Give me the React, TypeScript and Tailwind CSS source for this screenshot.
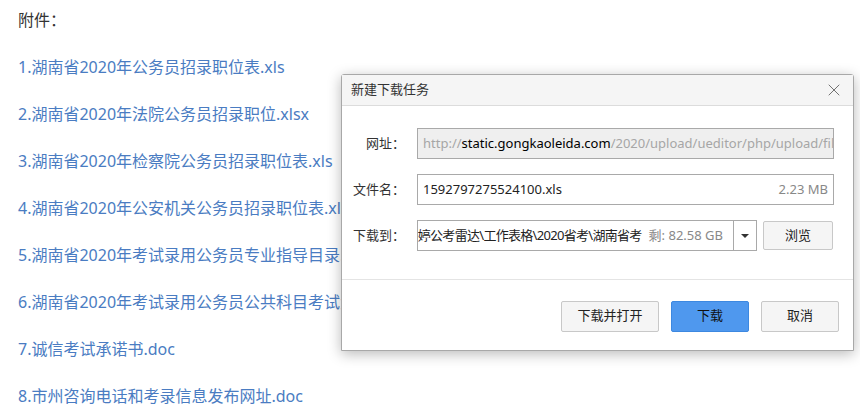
import { X } from "lucide-react";

const files = [
  "1.湖南省2020年公务员招录职位表.xls",
  "2.湖南省2020年法院公务员招录职位.xlsx",
  "3.湖南省2020年检察院公务员招录职位表.xls",
  "4.湖南省2020年公安机关公务员招录职位表.xls",
  "5.湖南省2020年考试录用公务员专业指导目录.xls",
  "6.湖南省2020年考试录用公务员公共科目考试大纲.doc",
  "7.诚信考试承诺书.doc",
  "8.市州咨询电话和考录信息发布网址.doc",
];

const cjk = "font-['Segoe_UI','Noto_Sans','Noto_Sans_CJK_SC',sans-serif]";

function Field({ label, children }: { label: string; children: React.ReactNode }) {
  return (
    <div className="flex items-center">
      <span className="w-[65px] pr-[12px] text-right text-[13px] text-[#333]">{label}</span>
      {children}
    </div>
  );
}

export default function App() {
  return (
    <div className={`relative h-[415px] w-[860px] overflow-hidden bg-white ${cjk}`}>
      <div className="flex flex-col gap-[23px] pl-[18px] pt-[8px] text-[16px] leading-[24px] whitespace-nowrap">
        <p className="text-[#333]">附件：</p>
        {files.map((f) => (
          <p key={f} className="text-[#4a7cc2]">
            {f}
          </p>
        ))}
      </div>

      <div className="absolute left-[341px] top-[74px] flex h-[277px] w-[513px] flex-col rounded-t-[3px] border border-[#a8a8a8] bg-white shadow-[0_3px_14px_rgba(0,0,0,0.28)]">
        <div className="flex h-[31px] items-center justify-between border-b border-[#dcdcdc] bg-[#f5f5f5] pl-[9px] pr-[9px]">
          <span className="text-[13px] text-[#333]">新建下载任务</span>
          <X className="h-[20px] w-[20px] text-[#666]" strokeWidth={1.1} />
        </div>

        <div className="flex flex-col gap-[15px] pl-[10px] pt-[22px]">
          <Field label="网址：">
            <div className="flex h-[31px] w-[417px] items-center overflow-hidden whitespace-nowrap border border-[#a9a9a9] bg-[#efefef] pl-[5px] text-[13px] text-[#a6a6a6]">
              http://<span className="text-black">static.gongkaoleida.com</span>/2020/upload/ueditor/php/upload/file/2
            </div>
          </Field>
          <Field label="文件名：">
            <div className="flex h-[31px] w-[417px] items-center justify-between border border-[#a9a9a9] bg-white pl-[5px] pr-[5px] text-[13px]">
              <span className="text-[#222]">1592797275524100.xls</span>
              <span className="text-[#888]">2.23 MB</span>
            </div>
          </Field>
          <Field label="下载到：">
            <div className="flex h-[31px] w-[340px] items-center border border-[#a9a9a9] bg-white text-[13px]">
              <div className="flex min-w-0 flex-1 justify-end overflow-hidden whitespace-nowrap pr-[10px]">
                <span className="shrink-0 tracking-[-0.7px] text-[#222]">婷公考雷达\工作表格\2020省考\湖南省考</span>
                <span className="ml-[7px] shrink-0 text-[#888]">剩: 82.58 GB</span>
              </div>
              <div className="flex h-full w-[23px] shrink-0 items-center justify-center border-l border-[#a9a9a9]">
                <span className="h-0 w-0 border-x-[4px] border-t-[4px] border-x-transparent border-t-[#333]" />
              </div>
            </div>
            <button className="ml-[6px] h-[29px] w-[70px] rounded-[2px] border border-[#c8c8c8] bg-[#f5f5f5] text-[13px] text-[#222]">
              浏览
            </button>
          </Field>
        </div>

        <div className="mt-[28px] flex flex-1 items-center justify-end gap-[12px] border-t border-[#e4e4e4] pr-[14px] pt-[2px] text-[13px]">
          <button className="h-[31px] w-[98px] rounded-[2px] border border-[#c8c8c8] bg-[#f5f5f5] text-[#222]">下载并打开</button>
          <button className="h-[31px] w-[78px] rounded-[2px] border border-[#3d88e0] bg-[#4f98ee] text-[#111]">下载</button>
          <button className="h-[31px] w-[78px] rounded-[2px] border border-[#c8c8c8] bg-[#f5f5f5] text-[#222]">取消</button>
        </div>
      </div>
    </div>
  );
}
